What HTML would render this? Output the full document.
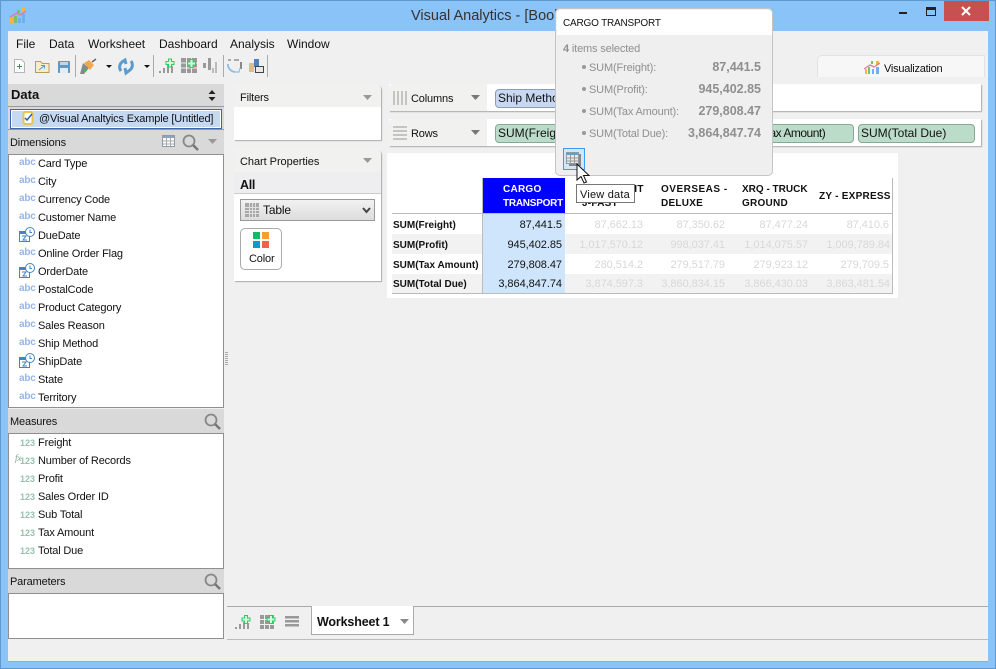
<!DOCTYPE html>
<html><head><meta charset="utf-8">
<style>
html,body{margin:0;padding:0;width:996px;height:669px;overflow:hidden;background:#8ac3f8}
body{position:relative;font-family:"Liberation Sans",sans-serif;font-size:11px;color:#111}
.a,.t,svg{position:absolute}
.t{white-space:nowrap;line-height:16px;font-size:11px;letter-spacing:-.15px}
.m{font-size:12px;letter-spacing:0;line-height:14px}
.b{font-weight:bold}
.ic{color:#93b6ec;font-size:10px;left:19px;font-weight:bold;letter-spacing:-.2px}
.n{color:#97c2ae;font-size:9px;left:20px;font-weight:bold;letter-spacing:0}
.chip{position:absolute;height:17px;border:1px solid #8aa;border-radius:4px;line-height:17px;padding-left:2px;white-space:nowrap;overflow:hidden;font-size:12px}
.g{background:#bbdcc8;border-color:#8aa898}
.r{text-align:right;width:84px;font-size:11px;letter-spacing:-.05px;line-height:14px}
.f{color:#d8d8d8}
.hd{font-weight:bold;font-size:10px;letter-spacing:.25px}
.rl{font-weight:bold;font-size:10px;letter-spacing:0;left:393px}
.pop{color:#8f8f8f}
.v{line-height:14px;left:661px;width:100px;text-align:right;font-size:12.500px;letter-spacing:0}
</style></head><body>
<div class="a" style="left:0;top:0;width:996px;height:669px;background:#8ac3f8;border:1px solid #5f97cf;box-sizing:border-box"></div>
<svg style="left:9px;top:7px" width="18" height="17" viewBox="0 0 18 17"><rect x="1" y="11" width="3" height="5" fill="#f4b63f"/><rect x="5" y="9" width="3" height="7" fill="#79c16f"/><rect x="9" y="11" width="3" height="5" fill="#6db2e8"/><rect x="13" y="7" width="3" height="9" fill="#6db2e8"/><rect x="13" y="1" width="3" height="4" fill="#f4b63f"/><rect x="8" y="3" width="3" height="3" fill="#79c16f"/><path d="M1 10L8 6L11 8L17 4" stroke="#d77fa5" stroke-width="1.4" fill="none"/></svg>
<div class="t" style="left:411px;top:8px;font-size:14.5px;line-height:16px;color:#333;letter-spacing:0">Visual Analytics - [Book1]</div>
<div class="a" style="left:899px;top:12px;width:8px;height:2px;background:#222"></div>
<div class="a" style="left:926px;top:7px;width:8px;height:5px;border:1px solid #222;border-top-width:3px"></div>
<div class="a" style="left:944px;top:1px;width:45px;height:20px;background:#c75050"></div>
<svg style="left:960px;top:5px" width="12" height="12"><path d="M2 2L10 10M10 2L2 10" stroke="#fff" stroke-width="2"/></svg>

<div class="a" style="left:8px;top:31px;width:980px;height:630px;background:#f0f0f0"></div>

<!-- menu -->
<div class="t m" style="left:16px;top:37px">File</div>
<div class="t m" style="left:49px;top:37px">Data</div>
<div class="t m" style="left:88px;top:37px">Worksheet</div>
<div class="t m" style="left:159px;top:37px">Dashboard</div>
<div class="t m" style="left:230px;top:37px">Analysis</div>
<div class="t m" style="left:287px;top:37px">Window</div>

<!-- toolbar -->
<svg style="left:0;top:50px" width="280" height="32" viewBox="0 0 280 32">
<path d="M14.500 9.500h7l3 3v10h-10z" fill="#fff" stroke="#b5b5b5"/><path d="M17 16.500h5M19.500 14v5" stroke="#3a9a4a"/>
<path d="M35.500 13.500v-2h5l2 2h6.500v9h-13.500z" fill="#f8eccb" stroke="#b79a5d"/><path d="M39 20l5-4M41 15.500h3.500v3" stroke="#5a9ad0" fill="none"/>
<rect x="58" y="11" width="12" height="12" rx="1" fill="#5f98c8"/><rect x="60" y="12" width="8" height="3" fill="#c5d6e3"/><rect x="60" y="18" width="8" height="5" fill="#e5edf3"/>
<path d="M75.500 5v22" stroke="#aaa"/>
<path d="M80 24l3-11 6 5-5 6z" fill="#888"/><path d="M84 13l5-3 5 5-4 5z" fill="#f0a84a"/><path d="M92 12l4-3" stroke="#666" stroke-width="1.500"/><rect x="84" y="19" width="3" height="2" fill="#35c24c"/>
<path d="M106 15h6l-3 3z" fill="#111"/>
<path d="M121 21a6.500 6.500 0 0 1 1-9l3-2 1 4M131 11a6.500 6.500 0 0 1-1 9l-4 3-1-5" stroke="#5c9ccd" stroke-width="3" fill="none"/>
<path d="M144 15h6l-3 3z" fill="#111"/>
<path d="M153.500 5v22" stroke="#aaa"/>
<path d="M159 23v-2h2v2zM163 23v-5h2v5zM167 23v-8h2v8zM171 23v-7h2v7z" fill="#999"/>
<path d="M168.500 9h3v2.500h2.500v3h-2.500v2.500h-3v-2.500h-2.500v-3h2.500z" fill="#d8f8e2" stroke="#23cf5e"/>
<rect x="181" y="8" width="16" height="15" fill="#999"/><path d="M181 13h16M181 18h16M186.500 8v15M191.500 8v15" stroke="#f0f0f0"/>
<path d="M190 9.500h3v2.500h2.500v3h-2.500v2.500h-3v-2.500h-2.500v-3h2.500z" fill="#d8f8e2" stroke="#23cf5e"/>
<rect x="203" y="13" width="3" height="5" fill="#999"/><rect x="208" y="8" width="3" height="12" fill="#999"/><rect x="212" y="18" width="2" height="5" fill="#bbb"/><rect x="215" y="12" width="2" height="11" fill="#bbb"/>
<path d="M223.500 5v22" stroke="#aaa"/>
<path d="M228 14v2a8 8 0 0 0 7 6" stroke="#8cc0e6" stroke-width="1.800" fill="none"/><path d="M228 10h3M234 10h5" stroke="#aaa" stroke-width="2"/><path d="M241 12v7" stroke="#888" stroke-width="2"/><path d="M234 22h5l1-4" stroke="#8cc0e6" stroke-width="1.200" fill="none"/>
<rect x="249" y="13" width="5" height="9" fill="#e0bd88"/><rect x="254" y="9" width="5" height="8" fill="#4f82b8"/><rect x="255.500" y="16.500" width="8" height="6" fill="#e8e8e8" stroke="#444"/>
<path d="M267.500 5v22" stroke="#aaa"/>
</svg>

<!-- viz tab -->
<div class="a" style="left:817px;top:55px;width:168px;height:22px;background:#f7f7f7;border:1px solid #e2e2e2;border-bottom:0;border-radius:5px 0 0 0;box-sizing:border-box"></div>
<svg style="left:864px;top:60px" width="16" height="15" viewBox="0 0 16 15"><rect x="1" y="9" width="2" height="5" fill="#f4b63f"/><rect x="4" y="7" width="2" height="7" fill="#79c16f"/><rect x="8" y="9" width="2" height="5" fill="#6db2e8"/><rect x="12" y="7" width="3" height="7" fill="#6db2e8"/><rect x="12" y="1" width="3" height="4" fill="#f4b63f"/><rect x="7" y="1" width="2" height="3" fill="#79c16f"/><path d="M0 9L6 5L10 7L16 3" stroke="#d77fa5" stroke-width="1.300" fill="none"/></svg>
<div class="t" style="left:884px;top:61px;letter-spacing:-.25px">Visualization</div>

<!-- Left panel -->
<div class="a" style="left:8px;top:84px;width:216px;height:22px;background:#d9d9d9"></div>
<div class="t b" style="left:11px;top:88px;font-size:13px;letter-spacing:0;line-height:14px">Data</div>
<svg style="left:208px;top:90px" width="8" height="11"><path d="M4 0l3.500 4h-7zM4 11l3.500-4h-7z" fill="#222"/></svg>
<div class="a" style="left:8px;top:106px;width:216px;height:24px;background:#d9d9d9;border-top:1px solid #999;border-bottom:1px solid #999;box-sizing:border-box"></div>
<div class="a" style="left:10px;top:109px;width:210px;height:18px;background:#c6d9f3;border:1px solid #3a68ad;outline:1px solid #fff;outline-offset:-2px"></div>
<svg style="left:21px;top:110px" width="14" height="16"><rect x="2.500" y="2" width="9" height="12" rx="2" fill="#fff" stroke="#e7c44b" stroke-width="2"/><path d="M4 8l2 2 5-6" stroke="#2c5fa5" stroke-width="1.500" fill="none"/></svg>
<div class="t" style="left:39px;top:111px">@Visual Analtyics Example [Untitled]</div>

<div class="a" style="left:8px;top:130px;width:216px;height:24px;background:#d9d9d9"></div>
<div class="t" style="left:10px;top:135px">Dimensions</div>
<svg style="left:162px;top:135px" width="14" height="13"><rect x=".5" y=".5" width="12" height="11" fill="#fff" stroke="#8a9caa"/><rect x="1" y="1" width="11" height="2" fill="#8aa4b8"/><path d="M1 6h11M1 9h11M4.500 3v8M8.500 3v8" stroke="#aaa"/></svg>
<svg style="left:182px;top:134px" width="18" height="18"><circle cx="7" cy="7" r="5.500" fill="none" stroke="#888" stroke-width="1.800"/><path d="M11 11l5 5" stroke="#777" stroke-width="2.500"/></svg>
<svg style="left:208px;top:139px" width="9" height="6"><path d="M0 0h9l-4.500 5z" fill="#999"/></svg>
<div class="a" style="left:8px;top:154px;width:216px;height:254px;background:#fff;border:1px solid #8f8f8f;box-sizing:border-box"></div>

<div class="t ic" style="top:155px">abc</div><div class="t" style="left:38px;top:156px">Card Type</div>
<div class="t ic" style="top:173px">abc</div><div class="t" style="left:38px;top:174px">City</div>
<div class="t ic" style="top:191px">abc</div><div class="t" style="left:38px;top:192px">Currency Code</div>
<div class="t ic" style="top:209px">abc</div><div class="t" style="left:38px;top:210px">Customer Name</div>
<svg style="left:19px;top:227px" width="16" height="15"><rect x=".5" y="4.500" width="10" height="10" fill="#fff" stroke="#3f86c8"/><rect x="1" y="5" width="9" height="2" fill="#3f86c8"/><path d="M3 9h4l-3 4h4" stroke="#3f86c8" fill="none"/><circle cx="11" cy="5" r="4.500" fill="#fff" stroke="#3f86c8"/><path d="M11 2.500v3h2" stroke="#3f86c8" fill="none"/></svg><div class="t" style="left:38px;top:228px">DueDate</div>
<div class="t ic" style="top:245px">abc</div><div class="t" style="left:38px;top:246px">Online Order Flag</div>
<svg style="left:19px;top:263px" width="16" height="15"><rect x=".5" y="4.500" width="10" height="10" fill="#fff" stroke="#3f86c8"/><rect x="1" y="5" width="9" height="2" fill="#3f86c8"/><path d="M3 9h4l-3 4h4" stroke="#3f86c8" fill="none"/><circle cx="11" cy="5" r="4.500" fill="#fff" stroke="#3f86c8"/><path d="M11 2.500v3h2" stroke="#3f86c8" fill="none"/></svg><div class="t" style="left:38px;top:264px">OrderDate</div>
<div class="t ic" style="top:281px">abc</div><div class="t" style="left:38px;top:282px">PostalCode</div>
<div class="t ic" style="top:299px">abc</div><div class="t" style="left:38px;top:300px">Product Category</div>
<div class="t ic" style="top:317px">abc</div><div class="t" style="left:38px;top:318px">Sales Reason</div>
<div class="t ic" style="top:335px">abc</div><div class="t" style="left:38px;top:336px">Ship Method</div>
<svg style="left:19px;top:353px" width="16" height="15"><rect x=".5" y="4.500" width="10" height="10" fill="#fff" stroke="#3f86c8"/><rect x="1" y="5" width="9" height="2" fill="#3f86c8"/><path d="M3 9h4l-3 4h4" stroke="#3f86c8" fill="none"/><circle cx="11" cy="5" r="4.500" fill="#fff" stroke="#3f86c8"/><path d="M11 2.500v3h2" stroke="#3f86c8" fill="none"/></svg><div class="t" style="left:38px;top:354px">ShipDate</div>
<div class="t ic" style="top:371px">abc</div><div class="t" style="left:38px;top:372px">State</div>
<div class="t ic" style="top:389px">abc</div><div class="t" style="left:38px;top:390px">Territory</div>

<div class="a" style="left:8px;top:409px;width:216px;height:24px;background:#d9d9d9"></div>
<div class="t" style="left:10px;top:414px">Measures</div>
<svg style="left:204px;top:413px" width="18" height="18"><circle cx="7" cy="7" r="5.500" fill="none" stroke="#888" stroke-width="1.800"/><path d="M11 11l5 5" stroke="#777" stroke-width="2.500"/></svg>
<div class="a" style="left:8px;top:433px;width:216px;height:136px;background:#fff;border:1px solid #8f8f8f;box-sizing:border-box"></div>
<div class="t n" style="top:435px">123</div><div class="t" style="left:38px;top:435px">Freight</div>
<div class="t n" style="top:453px">123</div><div class="t" style="left:15px;top:450px;font-size:9px;font-style:italic;color:#7aa892;font-family:'Liberation Serif',serif">fx</div><div class="t" style="left:38px;top:453px">Number of Records</div>
<div class="t n" style="top:471px">123</div><div class="t" style="left:38px;top:471px">Profit</div>
<div class="t n" style="top:489px">123</div><div class="t" style="left:38px;top:489px">Sales Order ID</div>
<div class="t n" style="top:507px">123</div><div class="t" style="left:38px;top:507px">Sub Total</div>
<div class="t n" style="top:525px">123</div><div class="t" style="left:38px;top:525px">Tax Amount</div>
<div class="t n" style="top:543px">123</div><div class="t" style="left:38px;top:543px">Total Due</div>

<div class="a" style="left:8px;top:569px;width:216px;height:24px;background:#d9d9d9"></div>
<div class="t" style="left:10px;top:574px">Parameters</div>
<svg style="left:204px;top:573px" width="18" height="18"><circle cx="7" cy="7" r="5.500" fill="none" stroke="#888" stroke-width="1.800"/><path d="M11 11l5 5" stroke="#777" stroke-width="2.500"/></svg>
<div class="a" style="left:8px;top:593px;width:216px;height:46px;background:#fff;border:1px solid #8f8f8f;box-sizing:border-box"></div>

<!-- splitter dots -->
<div class="a" style="left:225px;top:352px;width:3px;height:14px;background:repeating-linear-gradient(#aaa 0 1px,#f0f0f0 1px 2px)"></div>

<!-- Filters -->
<div class="a" style="left:234px;top:84px;width:147px;height:56px;background:#fff;border-radius:5px 5px 0 0;box-shadow:1px 1px 1px #aaa"></div>
<div class="a" style="left:234px;top:84px;width:147px;height:23px;background:#f1f1ef;border-radius:5px 5px 0 0"></div>
<div class="t" style="left:240px;top:90px">Filters</div>
<svg style="left:363px;top:95px" width="9" height="5"><path d="M0 0h9l-4.500 5z" fill="#999"/></svg>

<!-- Chart props -->
<div class="a" style="left:234px;top:149px;width:147px;height:132px;background:#fff;border-radius:5px 5px 0 0;box-shadow:1px 1px 1px #aaa"></div>
<div class="a" style="left:234px;top:149px;width:147px;height:23px;background:#f1f1ef;border-radius:5px 5px 0 0"></div>
<div class="t" style="left:240px;top:154px;letter-spacing:-.05px">Chart Properties</div>
<svg style="left:363px;top:158px" width="9" height="5"><path d="M0 0h9l-4.500 5z" fill="#999"/></svg>
<div class="a" style="left:234px;top:172px;width:147px;height:22px;background:#eeeef0;border-bottom:1px solid #ccc;box-sizing:border-box"></div>
<div class="t b" style="left:240px;top:177px;font-size:12.500px;letter-spacing:-.3px">All</div>
<div class="a" style="left:240px;top:199px;width:135px;height:22px;background:linear-gradient(#f2f2f2,#dcdcdc);border:1px solid #999;box-sizing:border-box"></div>
<svg style="left:245px;top:203px" width="14" height="14"><rect width="14" height="14" fill="#a8a8a8"/><path d="M0 4.500h14M0 7.500h14M0 10.500h14M4.500 0v14M7.500 0v14M10.500 0v14" stroke="#e0e0e0"/></svg>
<div class="t" style="left:263px;top:202px;font-size:12px">Table</div>
<svg style="left:362px;top:207px" width="9" height="7"><path d="M1 1l3.500 4L8 1" stroke="#444" stroke-width="2" fill="none"/></svg>
<div class="a" style="left:240px;top:228px;width:42px;height:42px;background:#fff;border:1px solid #aaa;border-radius:5px;box-sizing:border-box"></div>
<svg style="left:253px;top:232px" width="16" height="16"><rect width="7" height="7" fill="#0dbc6a"/><rect x="9" width="7" height="7" fill="#f99e2b"/><rect y="9" width="7" height="7" fill="#0d9bc9"/><rect x="9" y="9" width="7" height="7" fill="#ef5f52"/></svg>
<div class="t" style="left:249px;top:251px">Color</div>

<!-- Shelves -->
<div class="a" style="left:389px;top:84px;width:592px;height:27px;background:#fff;box-shadow:1px 1px 1px #aaa"></div>
<div class="a" style="left:389px;top:84px;width:98px;height:27px;background:#f1f1ef;border-radius:4px 0 0 0"></div>
<div class="a" style="left:393px;top:91px;width:14px;height:14px;background:repeating-linear-gradient(90deg,#c4c4c4 0 2px,transparent 2px 4px)"></div>
<div class="t" style="left:411px;top:91px">Columns</div>
<svg style="left:471px;top:95px" width="9" height="5"><path d="M0 0h9l-4.500 5z" fill="#777"/></svg>
<div class="a" style="left:389px;top:119px;width:592px;height:27px;background:#fff;box-shadow:1px 1px 1px #aaa"></div>
<div class="a" style="left:389px;top:119px;width:98px;height:27px;background:#f1f1ef;border-radius:4px 0 0 0"></div>
<div class="a" style="left:393px;top:126px;width:14px;height:14px;background:repeating-linear-gradient(#c4c4c4 0 2px,transparent 2px 4px)"></div>
<div class="t" style="left:411px;top:126px">Rows</div>
<svg style="left:471px;top:130px" width="9" height="5"><path d="M0 0h9l-4.500 5z" fill="#777"/></svg>
<div class="chip" style="left:495px;top:89px;width:80px;background:#c8d8f1;border-color:#8c9cb8">Ship Method</div>
<div class="chip g" style="left:495px;top:124px;width:80px">SUM(Freight)</div>
<div class="chip g" style="left:740px;top:124px;width:110px;text-indent:21px;letter-spacing:-.5px">Tax Amount)</div>
<div class="chip g" style="left:858px;top:124px;width:113px">SUM(Total Due)</div>

<!-- Table -->
<div class="a" style="left:387px;top:153px;width:511px;height:145px;background:#fff"></div>
<div class="a" style="left:392px;top:234px;width:500px;height:20px;background:#f2f2f2"></div>
<div class="a" style="left:392px;top:274px;width:500px;height:19px;background:#f2f2f2"></div>
<div class="a" style="left:483px;top:178px;width:82px;height:35px;background:#0000ff"></div>
<div class="a" style="left:483px;top:213px;width:82px;height:80px;background:#cfe5fb"></div>
<div class="a" style="left:392px;top:213px;width:500px;height:1px;background:#bbb"></div>
<div class="a" style="left:392px;top:293px;width:500px;height:1px;background:#bbb"></div>
<div class="a" style="left:482px;top:178px;width:1px;height:116px;background:#bbb"></div>
<div class="a" style="left:892px;top:178px;width:1px;height:116px;background:#bbb"></div>

<div class="t hd" style="left:503px;top:182px;color:#fff">CARGO</div>
<div class="t hd" style="left:503px;top:196px;color:#fff;letter-spacing:-.25px">TRANSPORT</div>
<div class="t hd" style="left:582px;top:182px">OVERNIGHT</div>
<div class="t hd" style="left:582px;top:196px">J-FAST</div>
<div class="t hd" style="left:661px;top:182px;letter-spacing:.5px">OVERSEAS -</div>
<div class="t hd" style="left:661px;top:196px">DELUXE</div>
<div class="t hd" style="left:742px;top:182px;letter-spacing:0">XRQ - TRUCK</div>
<div class="t hd" style="left:742px;top:196px">GROUND</div>
<div class="t hd" style="left:819px;top:189px">ZY - EXPRESS</div>

<div class="t rl" style="top:218px">SUM(Freight)</div>
<div class="t rl" style="top:238px">SUM(Profit)</div>
<div class="t rl" style="top:258px">SUM(Tax Amount)</div>
<div class="t rl" style="top:277px">SUM(Total Due)</div>

<div class="t r" style="left:478px;top:218px">87,441.5</div>
<div class="t r" style="left:478px;top:238px">945,402.85</div>
<div class="t r" style="left:478px;top:258px">279,808.47</div>
<div class="t r" style="left:478px;top:277px">3,864,847.74</div>

<div class="t r f" style="left:559px;top:218px">87,662.13</div>
<div class="t r f" style="left:559px;top:238px">1,017,570.12</div>
<div class="t r f" style="left:559px;top:258px">280,514.2</div>
<div class="t r f" style="left:559px;top:277px">3,874,597.3</div>
<div class="t r f" style="left:641px;top:218px">87,350.62</div>
<div class="t r f" style="left:641px;top:238px">998,037.41</div>
<div class="t r f" style="left:641px;top:258px">279,517.79</div>
<div class="t r f" style="left:641px;top:277px">3,860,834.15</div>
<div class="t r f" style="left:724px;top:218px">87,477.24</div>
<div class="t r f" style="left:724px;top:238px">1,014,075.57</div>
<div class="t r f" style="left:724px;top:258px">279,923.12</div>
<div class="t r f" style="left:724px;top:277px">3,866,430.03</div>
<div class="t r f" style="left:805px;top:218px">87,410.6</div>
<div class="t r f" style="left:806px;top:238px">1,009,789.84</div>
<div class="t r f" style="left:805px;top:258px">279,709.5</div>
<div class="t r f" style="left:806px;top:277px">3,863,481.54</div>

<!-- Popup -->
<div class="a" style="left:555px;top:8px;width:218px;height:168px;background:#efefef;border:1px solid #c4c4c4;border-radius:5px;box-sizing:border-box"></div>
<div class="a" style="left:557px;top:10px;width:215px;height:25px;background:#fff;border-radius:4px 4px 0 0"></div>
<div class="t" style="left:563px;top:15px;font-size:10px;letter-spacing:-.2px;line-height:17px">CARGO TRANSPORT</div>
<div class="t pop" style="left:563px;top:41px"><b>4</b> items selected</div>
<div class="a" style="left:582px;top:65px;width:4px;height:4px;border-radius:2px;background:#999"></div>
<div class="a" style="left:582px;top:87px;width:4px;height:4px;border-radius:2px;background:#999"></div>
<div class="a" style="left:582px;top:109px;width:4px;height:4px;border-radius:2px;background:#999"></div>
<div class="a" style="left:582px;top:131px;width:4px;height:4px;border-radius:2px;background:#999"></div>
<div class="t pop" style="left:589px;top:60px">SUM(Freight):</div>
<div class="t pop" style="left:589px;top:82px">SUM(Profit):</div>
<div class="t pop" style="left:589px;top:104px">SUM(Tax Amount):</div>
<div class="t pop" style="left:589px;top:126px">SUM(Total Due):</div>
<div class="t pop b v" style="top:60px">87,441.5</div>
<div class="t pop b v" style="top:82px">945,402.85</div>
<div class="t pop b v" style="top:104px">279,808.47</div>
<div class="t pop b v" style="top:126px">3,864,847.74</div>
<div class="a" style="left:563px;top:148px;width:22px;height:22px;background:#d3e6f8;border:1px solid #3d9bf0;box-sizing:border-box"></div>
<svg style="left:566px;top:152px" width="16" height="15"><rect x="3" y="2" width="12" height="12" fill="#888"/><rect x=".5" y=".5" width="12" height="11" fill="#e8e8e8" stroke="#8a9caa"/><rect x="1" y="1" width="11" height="2" fill="#5f9fcf"/><path d="M1 6h11M1 9h11M4.500 3v8M8.500 3v8" stroke="#999"/></svg>
<svg style="left:576px;top:163px" width="14" height="22"><path d="M1 1v16l4-3.500 3 6.500 2.500-1-3-6.500h5.500z" fill="#fff" stroke="#111"/></svg>
<div class="a" style="left:576px;top:184px;width:57px;height:17px;background:#fff;border:1px solid #777"></div>
<div class="t" style="left:580px;top:187px;letter-spacing:.2px">View data</div>

<!-- Bottom -->
<div class="a" style="left:227px;top:606px;width:84px;height:1px;background:#aaa"></div>
<div class="a" style="left:414px;top:606px;width:574px;height:1px;background:#aaa"></div>
<div class="a" style="left:311px;top:606px;width:103px;height:29px;background:#fff;border:1px solid #aaa;border-top:0;box-sizing:border-box"></div>
<div class="t b" style="left:317px;top:614px;font-size:12.500px;letter-spacing:-.15px">Worksheet 1</div>
<svg style="left:400px;top:619px" width="9" height="5"><path d="M0 0h9l-4.500 5z" fill="#888"/></svg>
<svg style="left:234px;top:612px" width="70" height="18" viewBox="0 0 70 18">
<path d="M1 17v-2h2v2zM5 17v-5h2v5zM9 17v-7h2v7zM13 17v-6h2v6z" fill="#999"/>
<path d="M10.500 3.500h3v2.500h2.500v3h-2.500v2.500h-3v-2.500h-2.500v-3h2.500z" fill="#d8f8e2" stroke="#23cf5e"/>
<rect x="26" y="3" width="14" height="14" fill="#999"/><path d="M26 7.500h14M26 12.500h14M30.500 3v14M35.500 3v14" stroke="#f0f0f0"/>
<path d="M35.500 3.500h3v2.500h2.500v3h-2.500v2.500h-3v-2.500h-2.500v-3h2.500z" fill="#d8f8e2" stroke="#23cf5e"/>
<path d="M51 4h14v2.500h-14zM51 8h14v2.500h-14zM51 12h14v2.500h-14z" fill="#999"/></svg>
<div class="a" style="left:227px;top:639px;width:761px;height:1px;background:#bbb"></div>
<div class="a" style="left:8px;top:661px;width:980px;height:1px;background:#7fb0de"></div>
</body></html>
